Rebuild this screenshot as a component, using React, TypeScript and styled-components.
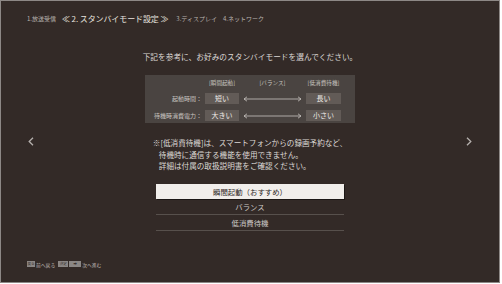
import React from "react";
import styled, { createGlobalStyle } from "styled-components";

const Global = createGlobalStyle`
  html, body { margin: 0; padding: 0; background: #ffffff; }
  body { font-family: "Noto Sans CJK JP", "Noto Sans", sans-serif; }
  * { box-sizing: border-box; }
`;

const Screen = styled.div`
  width: 500px;
  height: 283px;
  background: #332a27;
  border: 1px solid #8d8886;
  display: flex;
  flex-direction: column;
  color: #d9d5d2;
  overflow: hidden;
`;

const Breadcrumb = styled.div`
  display: flex;
  align-items: center;
  height: 12px;
  margin-top: 11px;
  padding-left: 26px;
  white-space: nowrap;
`;

const Step = styled.span<{ $gap?: number }>`
  font-size: 6px;
  color: #b9b3af;
  margin-left: ${(p) => p.$gap ?? 0}px;
`;

const Current = styled.span<{ $gap?: number }>`
  font-size: 8px;
  color: #e6e2df;
  margin-left: ${(p) => p.$gap ?? 0}px;
  letter-spacing: -0.1px;
`;

const Body = styled.div`
  display: flex;
  flex: 1;
`;

const Side = styled.div`
  width: 60px;
  display: flex;
  justify-content: center;
  padding-top: 113px;
`;

const Center = styled.div`
  flex: 1;
  display: flex;
  flex-direction: column;
  align-items: center;
`;

const Title = styled.div`
  margin-top: 27px;
  font-size: 7.7px;
  line-height: 12px;
  color: #dcd8d5;
  white-space: nowrap;
`;

const Panel = styled.div`
  margin-top: 12px;
  width: 210px;
  background: #4a4441;
  display: grid;
  grid-template-columns: 56px 34px 59px 35px;
  column-gap: 4px;
  row-gap: 6px;
  padding: 4px 14px 2px 0;
  align-items: center;
`;

const ColHead = styled.div`
  font-size: 5.6px;
  line-height: 8px;
  height: 8px;
  color: #c9c4c0;
  text-align: center;
  white-space: nowrap;
`;

const RowLabel = styled.div`
  font-size: 6px;
  color: #c9c4c0;
  text-align: right;
  white-space: nowrap;
  margin-right: -1px;
`;

const Chip = styled.div`
  height: 11px;
  background: #625b57;
  color: #ece8e5;
  font-size: 7px;
  line-height: 11px;
  text-align: center;
`;

const ArrowBox = styled.div`
  display: flex;
  align-items: center;
  height: 11px;
`;

const Note = styled.div`
  margin-top: 14px;
  font-size: 7.6px;
  line-height: 11.5px;
  color: #dcd8d5;
  white-space: nowrap;
`;

const NoteLine = styled.div<{ $indent?: boolean }>`
  padding-left: ${(p) => (p.$indent ? 6 : 0)}px;
`;

const List = styled.div`
  margin-top: 12px;
  width: 188px;
  display: flex;
  flex-direction: column;
`;

const Option = styled.div<{ $selected?: boolean }>`
  height: ${(p) => (p.$selected ? 15 : 16)}px;
  display: flex;
  align-items: center;
  justify-content: center;
  font-size: 7.4px;
  color: ${(p) => (p.$selected ? "#2e2826" : "#cfcac7")};
  background: ${(p) => (p.$selected ? "#f1eeeb" : "transparent")};
  border-bottom: ${(p) => (p.$selected ? "none" : "1px solid #57504c")};
  box-shadow: ${(p) => (p.$selected ? "1px 1px 0 #1c1715" : "none")};
`;

const Footer = styled.div`
  display: flex;
  align-items: center;
  height: 8px;
  padding-left: 26px;
  margin-bottom: 14px;
`;

const Key = styled.span<{ $w: number; $gap?: number }>`
  width: ${(p) => p.$w}px;
  height: 6px;
  background: #8b8785;
  color: #3a3230;
  font-size: 3.5px;
  line-height: 6px;
  text-align: center;
  margin-left: ${(p) => p.$gap ?? 0}px;
  display: inline-flex;
  align-items: center;
  justify-content: center;
  overflow: hidden;
`;

const FootText = styled.span<{ $gap?: number }>`
  font-size: 4.8px;
  color: #bdb7b3;
  margin-left: ${(p) => p.$gap ?? 0}px;
  white-space: nowrap;
`;

const Chevron = ({ dir }: { dir: "left" | "right" }) => (
  <svg width="6" height="9" viewBox="0 0 6 9">
    <path
      d={dir === "left" ? "M5 0.8 L1.2 4.5 L5 8.2" : "M1 0.8 L4.8 4.5 L1 8.2"}
      stroke="#b5b0ad"
      strokeWidth="1.3"
      fill="none"
    />
  </svg>
);

const DoubleArrow = () => (
  <svg width="59" height="6" viewBox="0 0 59 6">
    <path d="M1 3 H58" stroke="#c9c4c0" strokeWidth="0.8" />
    <path d="M4 0.8 L1 3 L4 5.2" stroke="#c9c4c0" strokeWidth="0.8" fill="none" />
    <path d="M55 0.8 L58 3 L55 5.2" stroke="#c9c4c0" strokeWidth="0.8" fill="none" />
  </svg>
);

export default function App() {
  return (
    <>
      <Global />
      <Screen>
        <Breadcrumb>
          <Step>1.放送受信</Step>
          <Current $gap={6}>≪ 2. スタンバイモード設定 ≫</Current>
          <Step $gap={8}>3.ディスプレイ</Step>
          <Step $gap={6}>4.ネットワーク</Step>
        </Breadcrumb>
        <Body>
          <Side>
            <Chevron dir="left" />
          </Side>
          <Center>
            <Title>下記を参考に、お好みのスタンバイモードを選んでください。</Title>
            <Panel>
              <div />
              <ColHead>[瞬間起動]</ColHead>
              <ColHead>[バランス]</ColHead>
              <ColHead>[低消費待機]</ColHead>

              <RowLabel>起動時間：</RowLabel>
              <Chip>短い</Chip>
              <ArrowBox>
                <DoubleArrow />
              </ArrowBox>
              <Chip>長い</Chip>

              <RowLabel>待機時消費電力：</RowLabel>
              <Chip>大きい</Chip>
              <ArrowBox>
                <DoubleArrow />
              </ArrowBox>
              <Chip>小さい</Chip>
            </Panel>
            <Note>
              <NoteLine>※[低消費待機]は、スマートフォンからの録画予約など、</NoteLine>
              <NoteLine $indent>待機時に通信する機能を使用できません。</NoteLine>
              <NoteLine $indent>詳細は付属の取扱説明書をご確認ください。</NoteLine>
            </Note>
            <List>
              <Option $selected>瞬間起動（おすすめ）</Option>
              <Option>バランス</Option>
              <Option>低消費待機</Option>
            </List>
          </Center>
          <Side>
            <Chevron dir="right" />
          </Side>
        </Body>
        <Footer>
          <Key $w={8}>戻る</Key>
          <FootText $gap={1}>前へ戻る</FootText>
          <Key $w={10} $gap={3}>決定</Key>
          <Key $w={12} $gap={1}>➡</Key>
          <FootText $gap={1}>次へ進む</FootText>
        </Footer>
      </Screen>
    </>
  );
}
